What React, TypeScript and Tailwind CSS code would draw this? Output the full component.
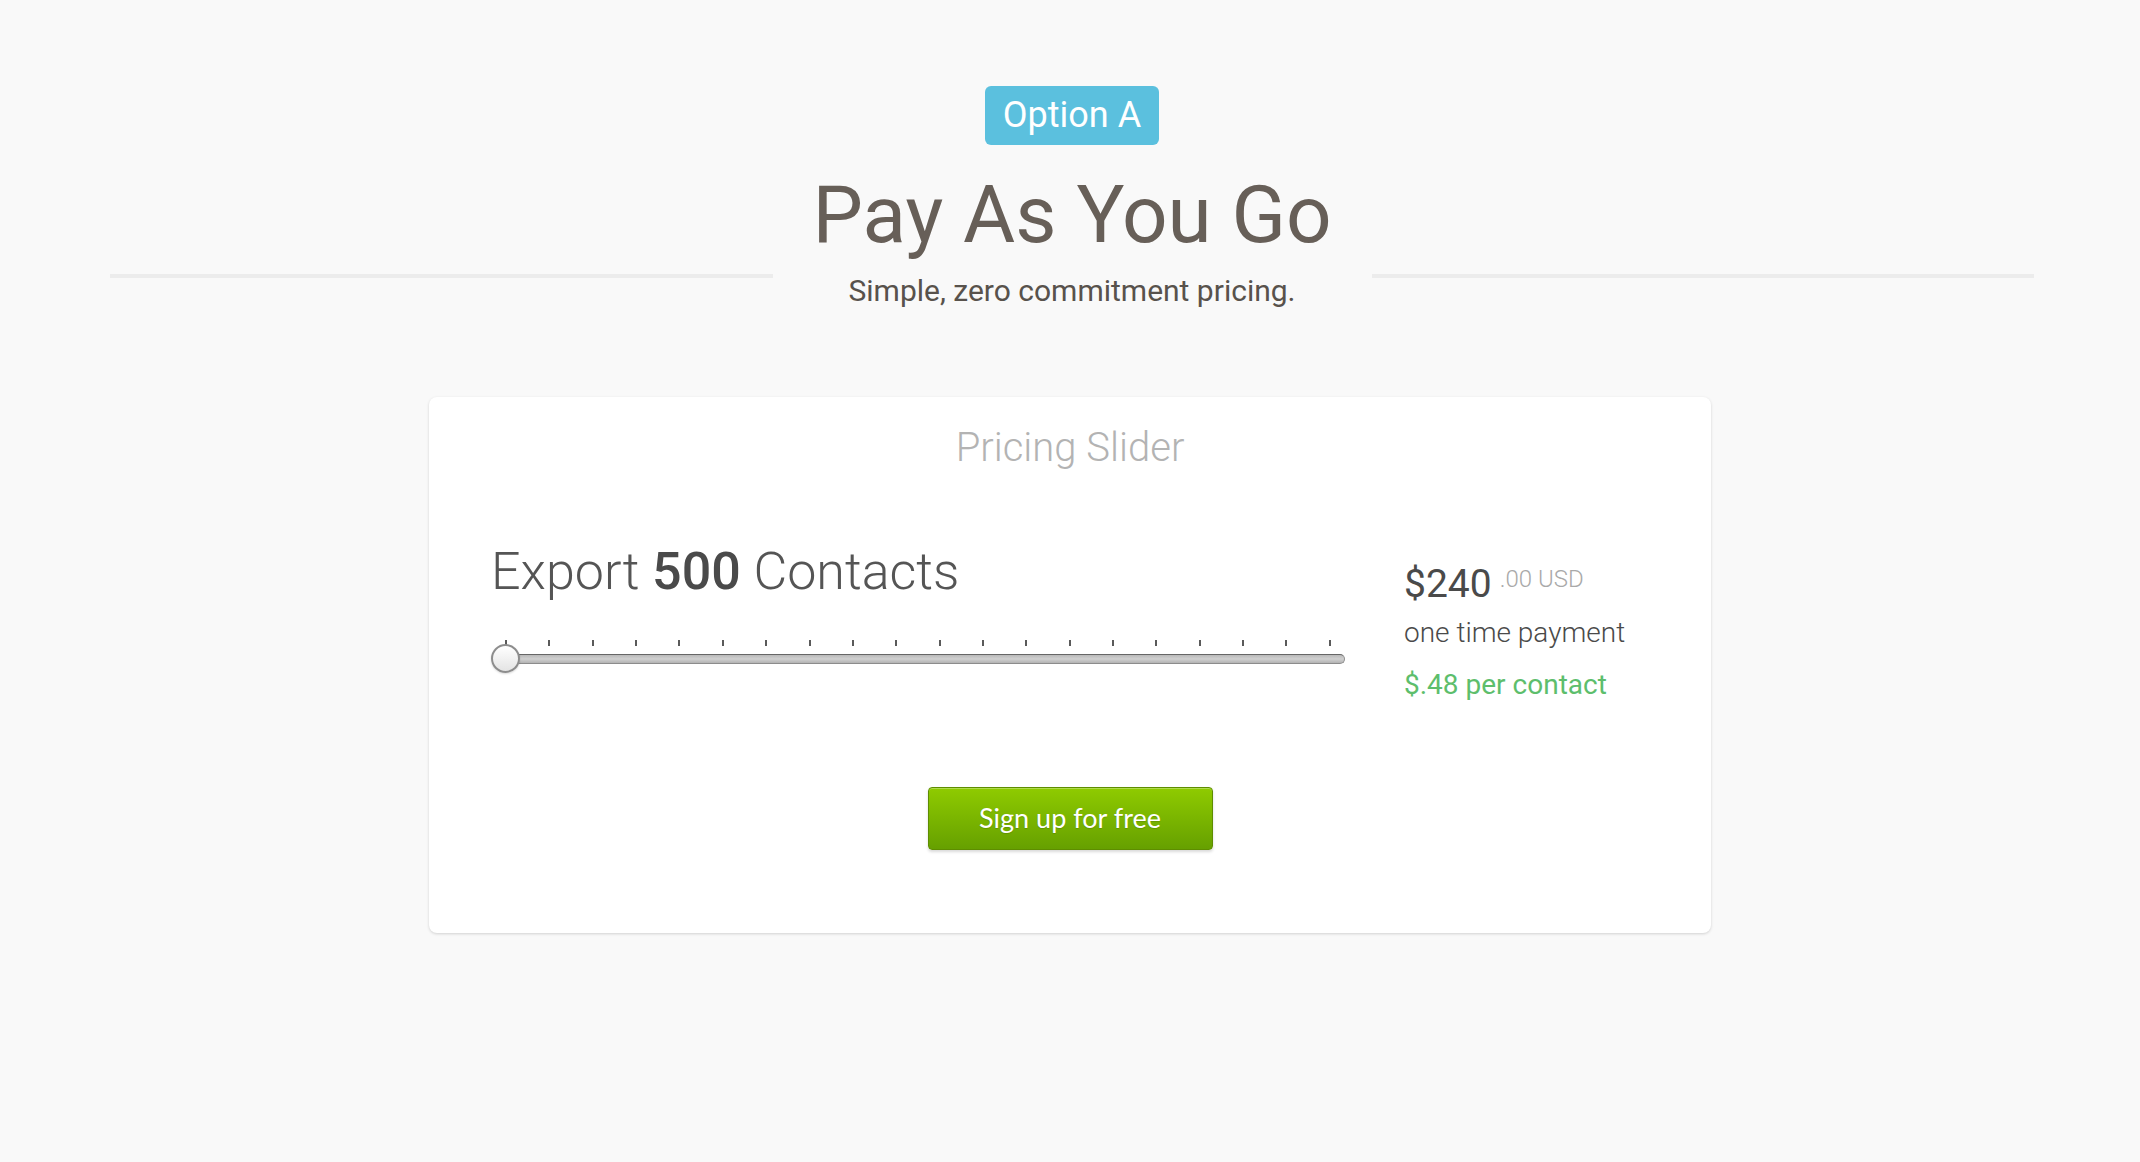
import React from 'react';

const TICKS = Array.from({ length: 20 }, (_, i) => i);

function HeadingLine() {
  return <div className="flex-1 h-[4px] mt-[188px] bg-[#ececec]" />;
}

function PricingSlider() {
  return (
    <div className="relative h-[34px] mt-[38px] w-[854px]">
      {/* tick marks */}
      <div className="flex justify-between px-[14px]">
        {TICKS.map((i) => (
          <span key={i} className="block w-[2px] h-[6px] bg-[#5a5a5a]" />
        ))}
      </div>
      {/* track */}
      <div className="mt-[8px] ml-[1px] h-[10px] rounded-full border border-[#8c8c8c] border-t-[#666] bg-gradient-to-b from-[#b9b9b9] via-[#d0d0d0] to-[#b3b3b3]" />
      {/* handle */}
      <div className="absolute left-0 top-[4px] w-[29px] h-[29px] rounded-full border-2 border-[#8d8d8d] bg-gradient-to-b from-white to-[#e4e4e4] shadow-[0_1px_2px_rgba(0,0,0,0.15)]" />
    </div>
  );
}

export default function App() {
  return (
    <div className="min-h-screen bg-[#f9f9f9] font-['Roboto','Liberation_Sans',sans-serif] pb-[200px]">
      {/* Header */}
      <div className="flex items-start pl-[110px] pr-[106px] pt-[86px]">
        <HeadingLine />
        <div className="w-[599px] flex flex-col items-center">
          <span className="inline-block w-[174px] h-[59px] text-center leading-[59px] text-[36px] text-white bg-[#5bc0de] rounded-[6px]">
            Option A
          </span>
          <h1 className="mt-[30px] text-[80px] leading-[80px] text-[#675f58] font-normal">Pay As You Go</h1>
          <p className="mt-[20px] text-[30px] leading-[32px] text-[#58524c]">Simple, zero commitment pricing.</p>
        </div>
        <HeadingLine />
      </div>

      {/* Pricing card */}
      <div className="mt-[90px] mx-auto w-[1282px] bg-white rounded-[8px] shadow-[0_1px_3px_rgba(0,0,0,0.16)] pt-[29px] pb-[83px]">
        <h2 className="text-center text-[40px] leading-[44px] font-light text-[#b3b3b3]">Pricing Slider</h2>

        <div className="flex items-start mt-[72px] pl-[62px]">
          <div className="flex flex-col">
            <div className="text-[52px] leading-[60px] font-light text-[#555]">
              Export <span className="font-medium text-[#4a4a4a]">500</span> Contacts
            </div>
            <PricingSlider />
          </div>

          <div className="ml-[59px] mt-[20px] flex flex-col">
            <div className="flex items-start">
              <span className="text-[39px] leading-[44px] text-[#4a4a4a]">$240</span>
              <span className="ml-[8px] mt-[4px] text-[24px] leading-[26px] font-light text-[#a9a9a9]">.00 USD</span>
            </div>
            <div className="mt-[11px] text-[28px] leading-[32px] font-light text-[#4a4a4a]">one time payment</div>
            <div className="mt-[20px] text-[28px] leading-[32px] text-[#5dbe6c]">$.48 per contact</div>
          </div>
        </div>

        <div className="flex justify-center mt-[86px]">
          <button className="w-[285px] h-[63px] rounded-[4px] border border-[#5e8d00] bg-gradient-to-b from-[#8fcb00] to-[#66a000] shadow-[inset_0_1px_0_rgba(255,255,255,0.3),0_2px_3px_rgba(0,0,0,0.15)] font-['Lato','Liberation_Sans',sans-serif] text-[27px] text-white [text-shadow:0_1px_1px_rgba(0,0,0,0.15)]">
            Sign up for free
          </button>
        </div>
      </div>
    </div>
  );
}
